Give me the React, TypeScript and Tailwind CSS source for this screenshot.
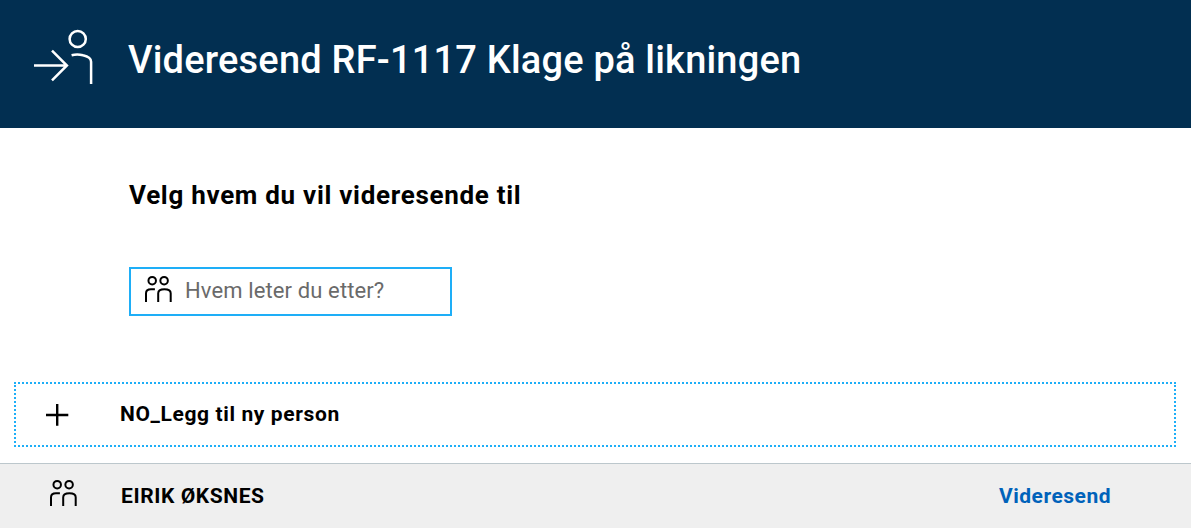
import React from "react";

function ForwardToPersonIcon() {
  return (
    <svg width="64" height="60" viewBox="32 27 64 60" fill="none" stroke="white" strokeWidth="2.5" className="shrink-0">
      <circle cx="77.7" cy="39" r="8.1" />
      <path d="M71.6 55.3C75 54.4 79 54.3 83 55.3C88 56.4 91.1 58.4 91.1 61.8V84" />
      <path d="M34 65.5H66.5M52 50.7L66.9 65.5L52 80.3" />
    </svg>
  );
}

function GroupIcon() {
  return (
    <svg width="28" height="28" viewBox="0 0 28 28" fill="none" stroke="black" strokeWidth="2" className="shrink-0">
      <circle cx="8.2" cy="5.7" r="3.75" />
      <circle cx="20.1" cy="5.7" r="3.75" />
      <path d="M2 27V18.2C2 15 4.2 14.2 7 14.2H10.9" />
      <path d="M14.2 27V18.2C14.2 15 17 14.2 20.4 14.2C24 14.2 26.7 15 26.7 18.2V27" />
    </svg>
  );
}

function PlusIcon() {
  return (
    <svg width="24" height="24" viewBox="0 0 24 24" fill="none" stroke="black" strokeWidth="2.4" className="shrink-0">
      <path d="M1 12H23.3M12.2 1V22.8" />
    </svg>
  );
}

export default function App() {
  return (
    <div className="flex h-[528px] w-full flex-col overflow-hidden bg-white font-['Roboto','Liberation_Sans',sans-serif] text-black">
      <header className="flex h-32 shrink-0 items-start bg-[#022f51] pt-[27px] pl-8">
        <ForwardToPersonIcon />
        <h1 className="ml-[32px] pt-[9px] text-[38px] leading-[48px] font-medium tracking-[0.2px] whitespace-nowrap text-white">
          Videresend RF-1117 Klage på likningen
        </h1>
      </header>

      <main className="flex flex-1 flex-col">
        <section className="flex flex-col items-start pt-[50px] pl-[129px]">
          <h2 className="text-[26px] leading-[34px] font-bold tracking-[0.7px] whitespace-nowrap">Velg hvem du vil videresende til</h2>
          <label className="mt-[55px] flex h-[49px] w-[323px] items-start border-2 border-[#1eaef7] pt-[6px] pl-[13px]">
            <GroupIcon />
            <input
              type="text"
              placeholder="Hvem leter du etter?"
              className="mt-px ml-[13px] h-[30px] w-[250px] text-[22px] leading-[30px] tracking-[0.12px] outline-none placeholder:text-[#6a6a6a]"
            />
          </label>
        </section>

        <button className="mt-[66px] mr-[15px] ml-[14px] flex h-[65px] shrink-0 items-center border-2 border-dotted border-[#1eaef7] pl-[29px] text-left">
          <PlusIcon />
          <span className="ml-[51px] pb-[2px] text-[21px] leading-7 font-bold tracking-[0.62px] whitespace-nowrap">NO_Legg til ny person</span>
        </button>

        <div className="mt-4 flex h-[66px] shrink-0 items-center border-t border-[#bcc7cc] bg-[#efefef] pr-[80px] pl-[49px]">
          <div className="pb-2">
            <GroupIcon />
          </div>
          <span className="ml-[44px] flex-1 pb-[2px] text-[21px] leading-7 font-bold tracking-[0.6px]">EIRIK ØKSNES</span>
          <a className="pb-[2px] text-[21px] leading-7 font-bold tracking-[0.5px] text-[#0062ba]">Videresend</a>
        </div>
      </main>
    </div>
  );
}
